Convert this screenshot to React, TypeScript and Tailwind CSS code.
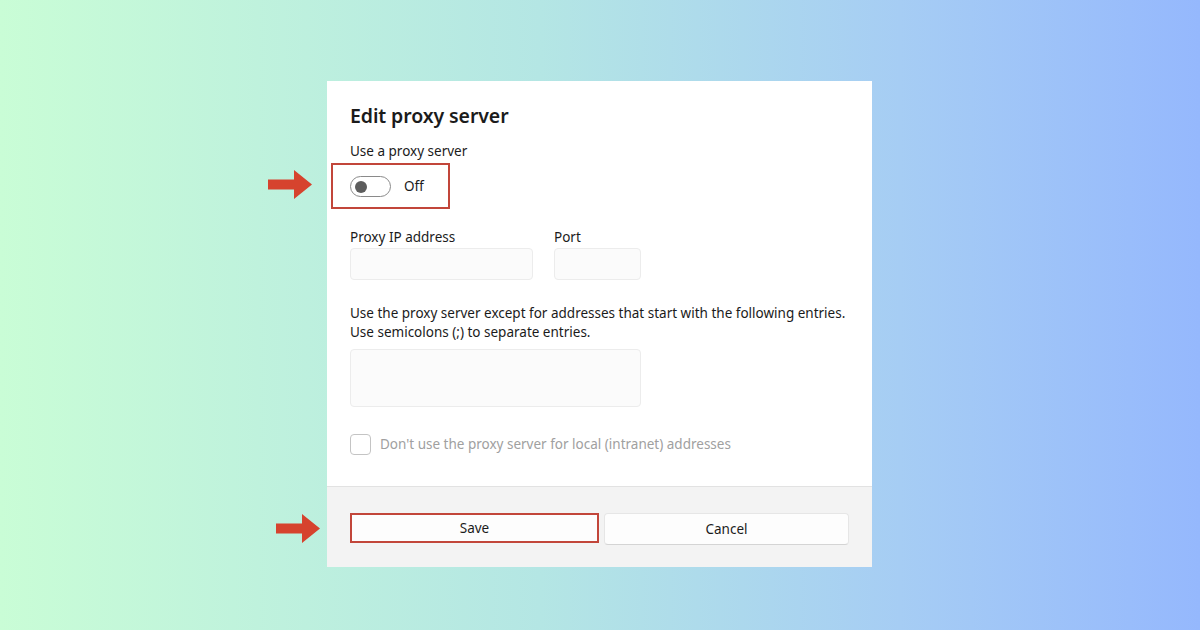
import React from "react";

const FONT = { fontFamily: '"Noto Sans", "Open Sans", Arial, sans-serif' };

function Arrow({ className }: { className: string }) {
  return (
    <svg className={className} width="44" height="29" viewBox="0 0 44 29">
      <path d="M0 9.5 H26 V0 L44 14.5 L26 29 V19.5 H0 Z" fill="#d6432e" />
    </svg>
  );
}

export default function App() {
  return (
    <div
      className="relative h-[630px] w-[1200px] overflow-hidden bg-[linear-gradient(90deg,#c9fdd6_0%,#b4e6e4_45%,#a6cdf4_75%,#95b8fd_100%)] pt-[81px]"
      style={FONT}
    >
      <Arrow className="absolute left-[268px] top-[170px]" />
      <Arrow className="absolute left-[276px] top-[514px]" />

      <div className="relative ml-[327px] flex h-[486px] w-[545px] flex-col bg-white text-[#1b1b1b]">
        {/* annotation round the toggle */}
        <div className="pointer-events-none absolute left-[4px] top-[82px] h-[46px] w-[119px] border-2 border-[#c2463a]" />

        <div className="flex-1 px-[23px] pt-[20px]">
          <h1 className="text-[19.5px] font-semibold leading-[30px] tracking-[-0.1px]">Edit proxy server</h1>
          <div className="mt-[10px] text-[13.5px] leading-[20px]">Use a proxy server</div>

          <div className="mt-[15px] flex items-center gap-[13px]">
            <div className="flex h-[21px] w-[41px] items-center rounded-full border border-[#8a8a8a] pl-[4px]">
              <div className="h-[12px] w-[12px] rounded-full bg-[#5d5d5d]" />
            </div>
            <span className="text-[13.5px]">Off</span>
          </div>

          <div className="mt-[30px] flex gap-[21px]">
            <div className="flex flex-col">
              <span className="text-[13.5px] leading-[20px]">Proxy IP address</span>
              <div className="mt-[1px] h-[32px] w-[183px] rounded-[4px] border border-[#ececec] bg-[#fbfbfb]" />
            </div>
            <div className="flex flex-col">
              <span className="text-[13.5px] leading-[20px]">Port</span>
              <div className="mt-[1px] h-[32px] w-[87px] rounded-[4px] border border-[#ececec] bg-[#fbfbfb]" />
            </div>
          </div>

          <p className="mt-[24px] text-[13.5px] leading-[19px]">
            Use the proxy server except for addresses that start with the following entries.
            <br />
            Use semicolons (;) to separate entries.
          </p>
          <div className="mt-[7px] h-[58px] w-[291px] rounded-[4px] border border-[#ececec] bg-[#fbfbfb]" />

          <div className="mt-[27px] flex items-center gap-[9px]">
            <div className="h-[21px] w-[21px] rounded-[4px] border border-[#c4c4c4] bg-white" />
            <span className="text-[13.5px] text-[#a0a0a0]">Don't use the proxy server for local (intranet) addresses</span>
          </div>
        </div>

        <div className="flex h-[81px] gap-[5px] border-t border-[#e2e2e2] bg-[#f3f3f3] px-[23px] pt-[26px]">
          <button className="h-[30px] w-[249px] border-2 border-[#c2463a] bg-[#fdfdfd] text-[13.5px] text-[#1b1b1b]">
            Save
          </button>
          <button className="h-[32px] w-[245px] rounded-[4px] border border-[#e6e6e6] border-b-[#d4d4d4] bg-[#fdfdfd] text-[13.5px] text-[#1b1b1b]">
            Cancel
          </button>
        </div>
      </div>
    </div>
  );
}
